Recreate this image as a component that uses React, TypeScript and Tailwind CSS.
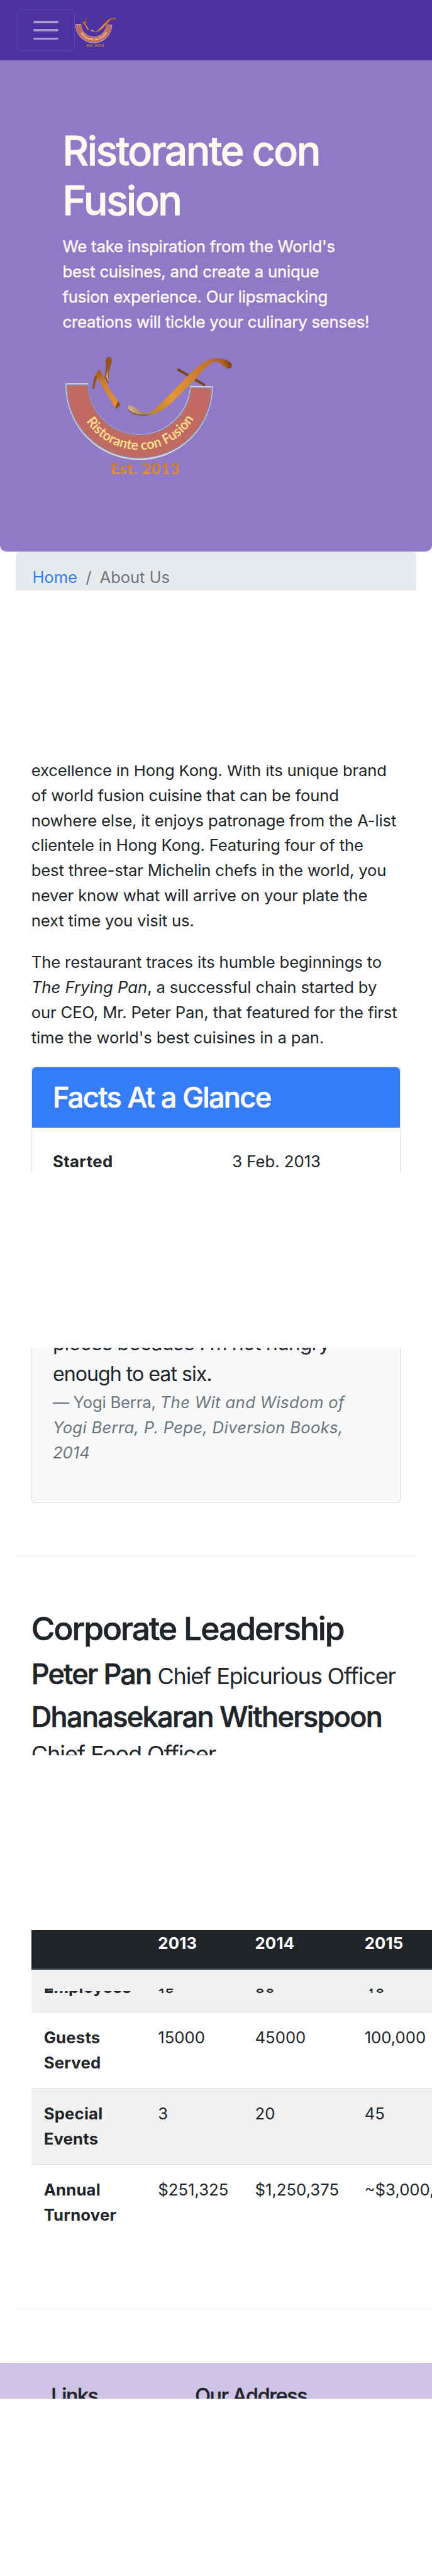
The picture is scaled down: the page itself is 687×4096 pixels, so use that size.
import type { ReactNode } from 'react'

function Logo({ className }: { className: string }) {
  return (
    <svg viewBox="45 60 970 700" className={className} role="img">
      <defs>
        <linearGradient id="blade" x1="0" y1="0" x2="0" y2="1">
          <stop offset="0" stopColor="#9a5218" />
          <stop offset="0.3" stopColor="#cc7c2b" />
          <stop offset="1" stopColor="#e3963b" />
        </linearGradient>
        <linearGradient id="sword" gradientUnits="userSpaceOnUse" x1="405" y1="390" x2="1005" y2="110">
          <stop offset="0" stopColor="#e2bd98" />
          <stop offset="0.1" stopColor="#b08a63" />
          <stop offset="0.25" stopColor="#c8852f" />
          <stop offset="0.4" stopColor="#e3963b" />
          <stop offset="0.8" stopColor="#c4742a" />
          <stop offset="0.93" stopColor="#b0601f" />
          <stop offset="1" stopColor="#713b0c" />
        </linearGradient>
        <linearGradient id="est" x1="0" y1="0" x2="0" y2="1">
          <stop offset="0" stopColor="#bf7029" />
          <stop offset="1" stopColor="#e89a3c" />
        </linearGradient>
        <path id="arc" d="M104 243 A366 366 0 0 0 836 243" />
      </defs>
      <path d="M50 228 H172 A298 302 0 0 0 767 243 L890 246 A420 420 0 0 1 470 663 A420 425 0 0 1 50 228Z" fill="#d9d6cf" stroke="#d9d6cf" strokeWidth="8" />
      <path d="M53 234 H175 A297 296 0 0 0 768 248 L887 252 A417 404 0 0 1 470 655 A417 415 0 0 1 53 234Z" fill="#c06a62" stroke="#7b8fc0" strokeWidth="5" />
      <path d="M276 92 Q282 72 298 73 Q313 76 313 95 Q291 155 293 230 L270 190 Q281 140 276 92Z" fill="#95541b" />
      <path d="M278 185 Q289 165 289 120 Q288 160 293 215Z" fill="#d4a986" />
      <path d="M202 255 Q205 185 237 146 Q250 155 260 182 Q290 235 302 262 L362 348 L337 374 L228 195 Q215 215 212 256Z" fill="url(#blade)" />
      <path d="M202 255 Q204 205 220 176 L228 195 Q215 215 212 256Z M348 328 L362 348 L337 374 L332 362Z" fill="#8d4c18" />
      <path d="M695 137 L853 231 L846 243 L688 151Z" fill="#7a4515" />
      <path d="M409 351 Q430 350 462 376 Q495 402 530 392 Q560 376 612 323 L752 180 Q850 82 912 80 Q980 82 1003 115 Q1007 138 987 140 Q965 138 945 115 Q920 98 905 99 Q865 115 795 200 L655 340 Q580 408 510 412 Q430 408 407 378Z" fill="url(#sword)" />
      <path d="M407 372 Q430 402 480 404 Q530 408 570 388 Q530 412 490 412 Q425 408 407 378Z" fill="#77614a" />
      <text fontFamily="Lato, sans-serif" fontWeight="700" fontSize="80" fill="#f7dc8c" textLength="742" lengthAdjust="spacingAndGlyphs">
        <textPath href="#arc" startOffset="212">Ristorante con Fusion</textPath>
      </text>
      <text x="306" y="750" fontFamily="Lato, sans-serif" fontWeight="900" fontSize="89" fill="url(#est)" textLength="396" lengthAdjust="spacing">Est. 2013</text>
    </svg>
  )
}

function Lines({ lines }: { lines: ReactNode[] }) {
  return (
    <>
      {lines.map((line, i) => (
        <span key={i} className="block whitespace-nowrap">{line}</span>
      ))}
    </>
  )
}

const columns = 'grid grid-cols-[219px_186px_210px_1fr]'

function Cell({ children, bold }: { children?: ReactNode; bold?: boolean }) {
  return <div className={bold ? 'pl-6 font-bold tracking-[0.008em] whitespace-nowrap' : 'pl-6 whitespace-nowrap'}>{children}</div>
}

function Row({ head, values, striped }: { head: string[]; values: string[]; striped?: boolean }) {
  return (
    <div className={`${columns} border-t-2 border-[#dee2e6] pt-[25px] h-[146px] overflow-hidden ${striped ? 'bg-[#f1f1f1]' : ''}`}>
      <Cell bold><Lines lines={head} /></Cell>
      {values.map((v) => <Cell key={v}>{v}</Cell>)}
    </div>
  )
}

function EmployeeCells() {
  return (
    <>
      <Cell bold>Employees</Cell>
      <Cell>15</Cell>
      <Cell>30</Cell>
      <Cell>40</Cell>
    </>
  )
}

export default function App() {
  return (
    <div className="w-full h-[4939px] overflow-hidden bg-white [zoom:0.8293] font-['Inter','Liberation_Sans',sans-serif] text-[31px] leading-[48px] text-[#212529]">
      <nav className="flex items-center h-[116px] pl-8 bg-[#4c33a1]">
        <button className="flex flex-col items-center justify-center gap-3 w-28 h-20 rounded-lg border-2 border-white/10">
          <span className="block w-12 h-1 rounded-full bg-[#a699d0]" />
          <span className="block w-12 h-1 rounded-full bg-[#a699d0]" />
          <span className="block w-12 h-1 rounded-full bg-[#a699d0]" />
        </button>
        <Logo className="block w-20 h-[57.7px] ml-px mt-[6px]" />
      </nav>

      <header className="h-[942px] rounded-b-xl bg-[#9079c7] pt-[126px] px-[120px] text-[#fffaf0]">
        <h1 className="text-[77.6px] leading-[96px] font-medium tracking-[-0.039em] [-webkit-text-stroke:1px]">
          <Lines lines={['Ristorante con', 'Fusion']} />
        </h1>
        <p className="mt-[15px] tracking-[-0.008em] [-webkit-text-stroke:0.5px]">
          <Lines
            lines={[
              "We take inspiration from the World's",
              'best cuisines, and create a unique',
              'fusion experience. Our lipsmacking',
              'creations will tickle your culinary senses!',
            ]}
          />
        </p>
        <Logo className="block w-[323px] h-[233px] ml-[5px] mt-[39px]" />
      </header>

      <div className="mx-[30px] h-[74px] overflow-hidden rounded-t-lg bg-[#e8ebee] pt-[25px] pl-8 flex tracking-[-0.005em]">
        <span className="text-[#347cf6]">Home</span>
        <span className="px-4 text-[#6c757d]">/</span>
        <span className="text-[#6c757d]">About Us</span>
      </div>

      <section className="mt-[336px] mx-[60px] h-[780px] overflow-hidden">
        <p className="-mt-[15px] tracking-[-0.007em]">
          <Lines
            lines={[
              'excellence in Hong Kong. With its unique brand',
              'of world fusion cuisine that can be found',
              'nowhere else, it enjoys patronage from the A-list',
              'clientele in Hong Kong. Featuring four of the',
              'best three-star Michelin chefs in the world, you',
              'never know what will arrive on your plate the',
              'next time you visit us.',
            ]}
          />
        </p>
        <p className="mt-8 tracking-[-0.006em]">
          <Lines
            lines={[
              'The restaurant traces its humble beginnings to',
              <><em className="tracking-normal">The Frying Pan</em>, a successful chain started by</>,
              'our CEO, Mr. Peter Pan, that featured for the first',
              "time the world's best cuisines in a pan.",
            ]}
          />
        </p>
        <div className="mt-8 h-[300px] overflow-hidden rounded-lg border-2 border-black/[0.125]">
          <h3 className="h-[116px] border-b-2 border-[#3271df] bg-[#347df7] pt-6 pl-10 text-[54.3px] leading-[67px] font-medium tracking-[-0.036em] text-white [-webkit-text-stroke:0.8px]">
            Facts At a Glance
          </h3>
          <dl className="flex pt-[41px] pl-10">
            <dt className="w-[344px] font-bold tracking-[0.015em]">Started</dt>
            <dd className="tracking-normal">3 Feb. 2013</dd>
          </dl>
        </div>
      </section>

      <section className="mt-[336px] h-[781px] overflow-hidden">
        <div className="mx-[60px] h-[298px] overflow-hidden rounded-b-lg border-2 border-t-0 border-[#dadcdf] bg-[#f8f9fb] pl-10">
          <blockquote className="-mt-[39px] text-[38.8px] leading-[60px] tracking-[-0.031em]">
            <Lines lines={["pieces because I'm not hungry", 'enough to eat six.']} />
          </blockquote>
          <footer className="text-[#6c757d]">
            <Lines
              lines={[
                <><span className="tracking-[-0.008em]">— Yogi Berra, </span><em className="tracking-[0.014em]">The Wit and Wisdom of</em></>,
                <em className="tracking-[0.011em]">Yogi Berra, P. Pepe, Diversion Books,</em>,
                <em>2014</em>,
              ]}
            />
          </footer>
        </div>
        <hr className="mx-[30px] mt-[101px] border-t-2 border-[#ededee]" />
        <div className="mx-[60px] mt-[100px] whitespace-nowrap font-medium [-webkit-text-stroke:0.8px]">
          <h2 className="text-[62px] leading-[77px] tracking-[-0.038em]">Corporate Leadership</h2>
          <h3 className="mt-[15px] text-[54.3px] leading-[67px] tracking-[-0.041em]">
            Peter Pan <small className="text-[43.5px] leading-none font-normal tracking-[-0.033em] [-webkit-text-stroke:0px]">Chief Epicurious Officer</small>
          </h3>
          <h3 className="mt-[15px] text-[54.3px] leading-[67px] tracking-[-0.037em]">
            Dhanasekaran Witherspoon
            <br />
            <small className="text-[43.5px] leading-none font-normal tracking-[-0.03em] [-webkit-text-stroke:0px]">Chief Food Officer</small>
          </h3>
        </div>
      </section>

      <section className="mt-[336px] h-[829px] overflow-hidden">
        <div className="ml-[60px]">
          <div className={`${columns} h-[76px] border-b-4 border-[#383d42] bg-[#212529] pt-px text-white`}>
            <Cell />
            <Cell bold>2013</Cell>
            <Cell bold>2014</Cell>
            <Cell bold>2015</Cell>
          </div>
          <div className={`${columns} h-[41px] overflow-hidden bg-[#f1f1f1] pt-6`}>
            <EmployeeCells />
          </div>
          <div className="h-[39px] overflow-hidden bg-[#f1f1f1]">
            <div className={`${columns} -mt-[32px]`}>
              <EmployeeCells />
            </div>
          </div>
          <Row head={['Guests', 'Served']} values={['15000', '45000', '100,000']} />
          <Row striped head={['Special', 'Events']} values={['3', '20', '45']} />
          <Row head={['Annual', 'Turnover']} values={['$251,325', '$1,250,375', '~$3,000,']} />
        </div>
        <hr className="ml-[30px] mt-[132px] border-t-2 border-[#efefef]" />
        <hr className="mx-[30px] mt-[99px] border-t-2 border-[#e8e7ec]" />
      </section>

      <footer className="flex h-[70px] overflow-hidden border-b-2 border-[#f1f0f3] bg-[#cec4e6] pt-10 pl-[98px] text-[38.8px] font-medium tracking-[-0.041em] [-webkit-text-stroke:0.5px]">
        <h5 className="w-[276px]">Links</h5>
        <h5>Our Address</h5>
      </footer>
    </div>
  )
}
